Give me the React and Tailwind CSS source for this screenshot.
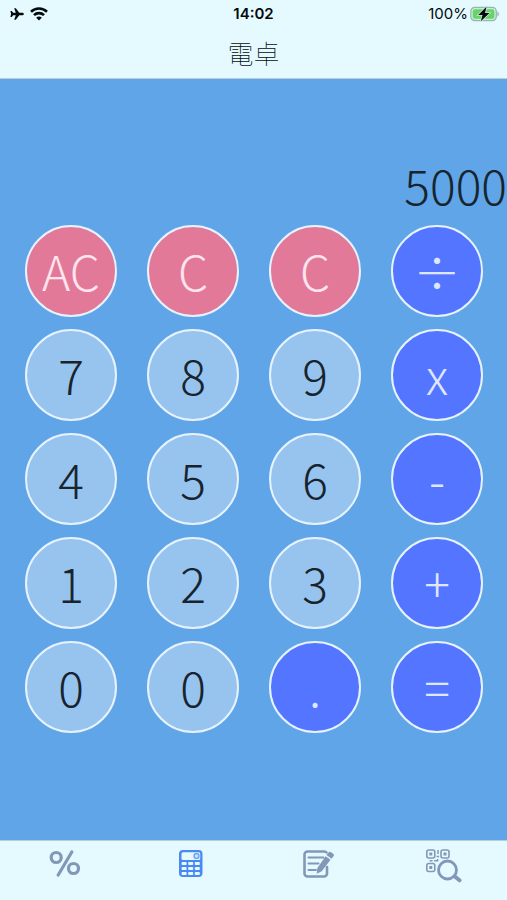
import React from "react";

const keys = [
  { label: "AC", kind: "clear" },
  { label: "C", kind: "clear" },
  { label: "C", kind: "clear" },
  { label: "÷", kind: "operator" },
  { label: "7", kind: "digit" },
  { label: "8", kind: "digit" },
  { label: "9", kind: "digit" },
  { label: "x", kind: "operator" },
  { label: "4", kind: "digit" },
  { label: "5", kind: "digit" },
  { label: "6", kind: "digit" },
  { label: "-", kind: "operator" },
  { label: "1", kind: "digit" },
  { label: "2", kind: "digit" },
  { label: "3", kind: "digit" },
  { label: "+", kind: "operator" },
  { label: "0", kind: "digit" },
  { label: "0", kind: "digit" },
  { label: ".", kind: "operator" },
  { label: "=", kind: "operator" },
];

const keyStyles = {
  clear: "bg-[#e27998] text-[#ffe3ee]",
  digit: "bg-[#97c3ef] text-[#17242e]",
  operator: "bg-[#5375ff] text-[#dfe7ff]",
};

function PlaneIcon() {
  return (
    <svg viewBox="0 0 14 12" className="h-3 w-3.5" fill="#050a0c" aria-hidden="true">
      <path d="M13.8 6c0-.8-.7-1.200-1.600-1.200H9.300L5.800.2H4.200L5.800 4.700H3.200L1.800 3.100H.4L1.100 6 .4 8.900h1.400l1.400-1.600h2.600l-1.600 4.500h1.600l3.500-4.600h2.900c.9 0 1.600-.4 1.600-1.200z" />
    </svg>
  );
}

function WifiIcon() {
  return (
    <svg viewBox="0 0 18 14" className="h-3.5 w-[18px]" fill="none" stroke="#050a0c" strokeWidth="2.600" aria-hidden="true">
      <path d="M1 4.800a11.500 11.500 0 0 1 16 0" />
      <path d="M4 8.200a7.100 7.100 0 0 1 10 0" />
      <path d="M9 13.600 6.200 10.800a3.900 3.900 0 0 1 5.600 0z" fill="#050a0c" stroke="none" />
    </svg>
  );
}

function BatteryIcon() {
  return (
    <svg viewBox="0 0 29 16" className="h-4 w-[29px]" aria-hidden="true">
      <rect x="0.8" y="1.300" width="25.500" height="13.400" rx="4" fill="#c9ead9" stroke="#97b5b5" strokeWidth="1.200" />
      <rect x="2.800" y="3.300" width="21.500" height="9.400" rx="2.200" fill="#66d467" />
      <path d="M27.400 5.500c2 .8 2 4.200 0 5z" fill="#97b5b5" />
      <path d="M16.500.8 8.200 8.900h4.300l-1.700 6.400L19.500 7H15z" fill="#050a0c" stroke="#c9ead9" strokeWidth="1.600" paintOrder="stroke" />
    </svg>
  );
}

function PercentIcon() {
  return (
    <svg viewBox="0 0 32 28" className="h-7 w-8" fill="none" stroke="#8298b8" aria-hidden="true">
      <circle cx="7.200" cy="8.500" r="5" strokeWidth="3.200" />
      <circle cx="24.500" cy="19.500" r="5" strokeWidth="3.200" />
      <path d="M22.800 3 9.200 26" strokeWidth="3.200" strokeLinecap="round" />
    </svg>
  );
}

function CalculatorIcon() {
  return (
    <svg viewBox="0 0 24 28" className="h-7 w-6" aria-hidden="true">
      <rect x="0" y="1" width="23.500" height="27" rx="4" fill="#4a88f3" />
      <rect x="2.500" y="3.300" width="18.700" height="7.600" rx="1.500" fill="#e4faff" />
      <circle cx="17.500" cy="7" r="2.500" fill="#c4e0ff" stroke="#6fa4f5" strokeWidth="1.400" />
      {[13, 18, 23].map((y) =>
        [2.6, 9.2, 15.8].map((x) => (
          <rect key={`${x}-${y}`} x={x} y={y} width="5" height="3" rx="0.800" fill="#e4faff" />
        ))
      )}
    </svg>
  );
}

function NoteIcon() {
  return (
    <svg viewBox="0 0 32 30" className="h-[30px] w-8" fill="none" stroke="#8298b8" aria-hidden="true">
      <path d="M24.500 3.500C24 2.500 23 2.500 22 2.500H5.500a3 3 0 0 0-3 3v19a3 3 0 0 0 3 3h16.500a3 3 0 0 0 3-3V18" strokeWidth="2.600" strokeLinecap="round" />
      <path d="M6.500 8.500h15M6.500 14.500h10M6.500 21h7.500" strokeWidth="2" strokeLinecap="round" />
      <path d="m23.600 7.200 4.900 3.600-8.700 11.500-5.100 2.500.7-5.800z" fill="#8298b8" stroke="none" />
      <path d="m24.500 6 2-2.500a1.800 1.800 0 0 1 2.500-.3l2.200 1.600a1.800 1.800 0 0 1 .3 2.500l-2 2.500z" fill="#8298b8" stroke="none" />
    </svg>
  );
}

function ScanIcon() {
  return (
    <svg viewBox="0 0 36 34" className="h-[34px] w-9" fill="none" stroke="#8298b8" aria-hidden="true">
      <g strokeWidth="1.600">
        <rect x="0.800" y="1" width="8" height="8" rx="2" />
        <rect x="15" y="1" width="8" height="8" rx="2" />
        <rect x="0.800" y="14.500" width="8" height="8" rx="2" />
      </g>
      <g fill="#8298b8" stroke="none">
        <rect x="3.300" y="3.500" width="3" height="3" />
        <rect x="17.500" y="3.500" width="3" height="3" />
        <rect x="3.300" y="17" width="3" height="3" />
      </g>
      <path d="M12 1v4M10.600 7.500h2.500M3.600 11.700h3M8.100 11.700h3M11.600 10v2.500" strokeWidth="1.500" />
      <circle cx="21.500" cy="21" r="9" strokeWidth="2.800" fill="#e4faff" />
      <path d="m28.800 27.500 4.700 3.800" strokeWidth="4" strokeLinecap="round" />
    </svg>
  );
}

const tabs = [
  { name: "パーセント", Icon: PercentIcon },
  { name: "電卓", Icon: CalculatorIcon },
  { name: "メモ", Icon: NoteIcon },
  { name: "QRコード", Icon: ScanIcon },
];

export default function App() {
  return (
    <div className="flex min-h-screen flex-col bg-[#5fa5e8] font-['Noto_Sans_CJK_JP',sans-serif] font-light">
      <header className="border-b border-[#b4cedb] bg-[#e4faff] pb-1.5 text-[#050a0c]">
        <div className="grid h-7 grid-cols-3 items-center px-2 font-['Inter',sans-serif] text-[15px]">
          <div className="flex items-center gap-1.5 pl-0.5">
            <PlaneIcon />
            <WifiIcon />
          </div>
          <time className="text-center font-semibold">14:02</time>
          <div className="flex items-center justify-end gap-0.5 font-normal">
            <span>100%</span>
            <BatteryIcon />
          </div>
        </div>
        <h1 className="pt-1.5 text-center text-[26px] font-thin leading-[38px]">電卓</h1>
      </header>

      <main className="flex-1 pt-[70px]">
        <output className="block pb-1.5 text-right text-5xl leading-[70px] text-[#17242e]">5000</output>
        <div className="grid grid-cols-4 gap-x-[30px] gap-y-3 pl-[25px] pr-6">
          {keys.map(({ label, kind }, i) => (
            <button
              key={i}
              type="button"
              className={`flex aspect-square items-center justify-center rounded-full border-2 border-[#e6f3ff] pb-0.5 text-5xl leading-none ${keyStyles[kind]}`}
            >
              {label}
            </button>
          ))}
        </div>
      </main>

      <nav className="grid h-[60px] grid-cols-4 border-t border-[#b4cedb] bg-[#e4faff] pl-0.5">
        {tabs.map(({ name, Icon }) => (
          <button key={name} type="button" aria-label={name} className="flex items-start justify-center pt-2">
            <Icon />
          </button>
        ))}
      </nav>
    </div>
  );
}
